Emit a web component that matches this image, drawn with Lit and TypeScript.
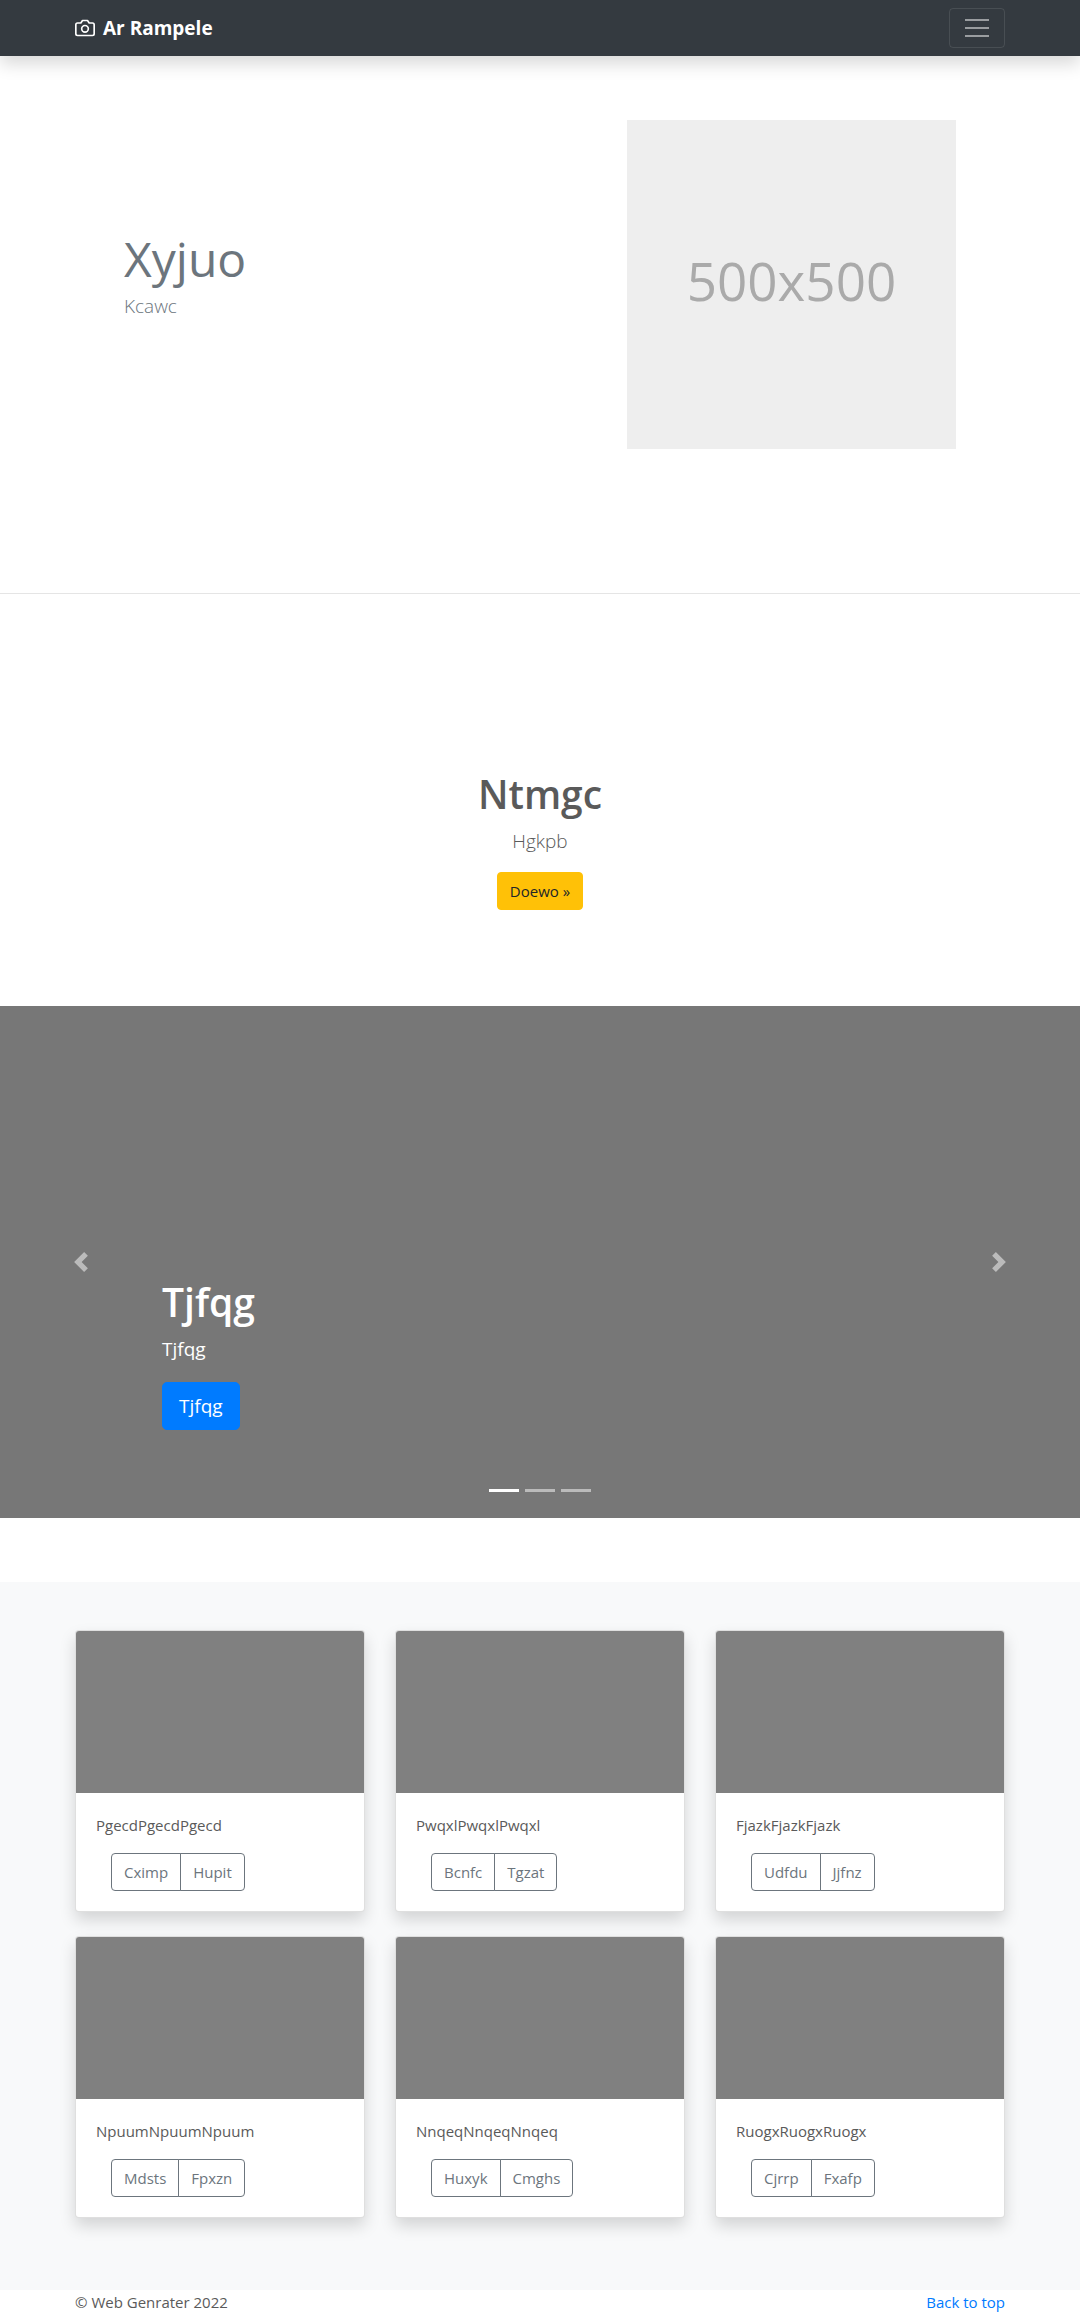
import { LitElement, html, css, svg } from "lit";
import { customElement, property, state } from "lit/decorators.js";
import { classMap } from "lit/directives/class-map.js";

interface Album {
  text: string;
  first: string;
  second: string;
}

const ALBUMS: Album[] = [
  { text: "PgecdPgecdPgecd", first: "Cximp", second: "Hupit" },
  { text: "PwqxlPwqxlPwqxl", first: "Bcnfc", second: "Tgzat" },
  { text: "FjazkFjazkFjazk", first: "Udfdu", second: "Jjfnz" },
  { text: "NpuumNpuumNpuum", first: "Mdsts", second: "Fpxzn" },
  { text: "NnqeqNnqeqNnqeq", first: "Huxyk", second: "Cmghs" },
  { text: "RuogxRuogxRuogx", first: "Cjrrp", second: "Fxafp" },
];

const cameraPath = svg`
  <path d="M23 19a2 2 0 0 1-2 2H3a2 2 0 0 1-2-2V8a2 2 0 0 1 2-2h4l2-3h6l2 3h4a2 2 0 0 1 2 2z"></path>
  <circle cx="12" cy="13" r="4"></circle>`;

@customElement("site-navbar")
export class SiteNavbar extends LitElement {
  static styles = css`
    :host { display: block; }
    .bar {
      position: relative;
      background: #343a40;
      box-shadow: 0 8px 16px rgba(0, 0, 0, 0.15);
    }
    .inner {
      box-sizing: border-box;
      max-width: 960px;
      margin: 0 auto;
      padding: 8px 15px;
      display: flex;
      align-items: center;
      justify-content: space-between;
    }
    .brand {
      display: flex;
      align-items: center;
      gap: 8px;
      color: #fff;
      font-size: 19px;
      line-height: 32px;
      font-weight: 700;
      text-decoration: none;
    }
    .camera {
      width: 20px;
      height: 20px;
      fill: none;
      stroke: currentColor;
      stroke-width: 2;
      stroke-linecap: round;
      stroke-linejoin: round;
    }
    .toggler {
      display: flex;
      padding: 4px 12px;
      border: 1px solid rgba(255, 255, 255, 0.1);
      border-radius: 4px;
      background: transparent;
      cursor: pointer;
    }
    .lines {
      width: 30px;
      height: 30px;
      stroke: rgba(255, 255, 255, 0.5);
      stroke-width: 2;
    }
  `;

  render() {
    return html`
      <header class="bar">
        <nav class="inner">
          <a class="brand" href="#">
            <svg class="camera" viewBox="0 0 24 24" aria-hidden="true">${cameraPath}</svg>
            <span>Ar Rampele</span>
          </a>
          <button class="toggler" type="button" aria-label="Toggle navigation">
            <svg class="lines" viewBox="0 0 30 30" aria-hidden="true">
              <path d="M3 7h24M3 15h24M3 23h24"></path>
            </svg>
          </button>
        </nav>
      </header>
    `;
  }
}

@customElement("site-carousel")
export class SiteCarousel extends LitElement {
  static styles = css`
    :host { display: block; }
    .carousel {
      position: relative;
      box-sizing: border-box;
      min-height: 512px;
      padding: 0 15% 88px;
      display: flex;
      flex-direction: column;
      justify-content: flex-end;
      align-items: flex-start;
      background: #777;
      color: #fff;
    }
    .title {
      margin: 0 0 8px;
      font-size: 39px;
      line-height: 48px;
      font-weight: 600;
    }
    .lead {
      margin: 0 0 18px;
      font-size: 19px;
      line-height: 30px;
    }
    .action {
      padding: 8px 16px;
      border: 1px solid #007bff;
      border-radius: 5px;
      background: #007bff;
      color: #fff;
      font-size: 19px;
      line-height: 30px;
      text-decoration: none;
    }
    .control {
      position: absolute;
      top: 0;
      bottom: 0;
      width: 15%;
      padding: 0;
      border: 0;
      display: flex;
      align-items: center;
      justify-content: center;
      background: none;
      opacity: 0.5;
      cursor: pointer;
    }
    .prev { left: 0; }
    .next { right: 0; }
    .chevron {
      width: 20px;
      height: 20px;
      fill: #fff;
    }
    .marks {
      position: absolute;
      left: 15%;
      right: 15%;
      bottom: 16px;
      display: flex;
      justify-content: center;
      gap: 6px;
    }
    .mark {
      width: 30px;
      height: 23px;
      padding: 10px 0;
      border: 0;
      background: #fff content-box;
      opacity: 0.5;
      cursor: pointer;
    }
    .mark.active { opacity: 1; }
  `;

  @state() private active = 0;

  private step(by: number) {
    this.active = (this.active + by + 3) % 3;
  }

  render() {
    return html`
      <section class="carousel">
        <h1 class="title">Tjfqg</h1>
        <p class="lead">Tjfqg</p>
        <a class="action" href="#">Tjfqg</a>
        <button class="control prev" type="button" aria-label="Previous" @click=${() => this.step(-1)}>
          <svg class="chevron" viewBox="0 0 8 8" aria-hidden="true">
            <path d="M5.25 0l-4 4 4 4 1.5-1.5L4.25 4l2.5-2.5L5.25 0z"></path>
          </svg>
        </button>
        <button class="control next" type="button" aria-label="Next" @click=${() => this.step(1)}>
          <svg class="chevron" viewBox="0 0 8 8" aria-hidden="true">
            <path d="M2.75 0l-1.5 1.5L3.75 4l-2.5 2.5L2.75 8l4-4-4-4z"></path>
          </svg>
        </button>
        <div class="marks">
          ${[0, 1, 2].map(
            (i) => html`<button
              type="button"
              class=${classMap({ mark: true, active: i === this.active })}
              aria-label="Slide ${i + 1}"
              @click=${() => (this.active = i)}
            ></button>`
          )}
        </div>
      </section>
    `;
  }
}

@customElement("album-card")
export class AlbumCard extends LitElement {
  static styles = css`
    :host { display: block; }
    .card {
      border: 1px solid rgba(0, 0, 0, 0.125);
      border-radius: 4px;
      background: #fff;
      background-clip: border-box;
      box-shadow: 0 8px 16px rgba(0, 0, 0, 0.15);
    }
    .thumb {
      height: 162px;
      border-radius: 3px 3px 0 0;
      background: #808080;
    }
    .body { padding: 20px; }
    .text {
      margin: 0 0 16px;
      font-size: 15px;
      line-height: 24px;
    }
    .group {
      display: flex;
      margin-left: 15px;
    }
    .btn {
      padding: 6px 12px;
      border: 1px solid #6c757d;
      background: transparent;
      color: #6c757d;
      font-family: inherit;
      font-size: 15px;
      line-height: 24px;
      cursor: pointer;
    }
    .first { border-radius: 4px 0 0 4px; }
    .second {
      margin-left: -1px;
      border-radius: 0 4px 4px 0;
    }
  `;

  @property({ attribute: false }) album!: Album;

  render() {
    return html`
      <article class="card">
        <div class="thumb"></div>
        <div class="body">
          <p class="text">${this.album.text}</p>
          <div class="group">
            <button class="btn first" type="button">${this.album.first}</button>
            <button class="btn second" type="button">${this.album.second}</button>
          </div>
        </div>
      </article>
    `;
  }
}

@customElement("app-root")
export class AppRoot extends LitElement {
  static styles = css`
    :host {
      display: block;
      background: #fff;
      color: #5a5a5a;
      font-family: "Open Sans", "Noto Sans", sans-serif;
      font-size: 15px;
      line-height: 24px;
    }
    .container {
      box-sizing: border-box;
      max-width: 960px;
      margin: 0 auto;
      padding: 0 15px;
    }
    .hero {
      display: flex;
      justify-content: space-between;
      align-items: flex-start;
      padding: 64px 64px 144px;
    }
    .intro {
      padding-top: 107px;
      color: #6c757d;
    }
    .heading {
      margin: 0;
      font-size: 48px;
      line-height: 64px;
      font-weight: 400;
    }
    .lead {
      margin: 0;
      font-size: 19px;
      line-height: 30px;
      font-weight: 300;
    }
    .picture {
      box-sizing: border-box;
      flex: 0 1 329px;
      aspect-ratio: 1;
      padding-bottom: 8px;
      display: flex;
      align-items: center;
      justify-content: center;
      background: #eee;
      color: #aaa;
      font-size: 53px;
      line-height: 64px;
    }
    .rule {
      margin: 0;
      border: 0;
      border-top: 1px solid rgba(0, 0, 0, 0.1);
    }
    .promo {
      padding: 176px 15px 96px;
      display: flex;
      flex-direction: column;
      align-items: center;
      text-align: center;
    }
    .title {
      margin: 0 0 8px;
      font-size: 39px;
      line-height: 48px;
      font-weight: 600;
    }
    .promo .lead { margin-bottom: 16px; }
    .more {
      padding: 6px 12px;
      border: 1px solid #ffc107;
      border-radius: 4px;
      background: #ffc107;
      color: #212529;
      text-decoration: none;
    }
    .album {
      margin-top: 64px;
      padding: 48px 0 72px;
      background: #f8f9fa;
    }
    .cards {
      display: grid;
      grid-template-columns: repeat(3, minmax(0, 1fr));
      gap: 24px 30px;
    }
    .footer {
      display: flex;
      justify-content: space-between;
    }
    .top {
      color: #007bff;
      text-decoration: none;
    }
  `;

  render() {
    return html`
      <site-navbar></site-navbar>
      <main>
        <section class="container hero">
          <div class="intro">
            <h2 class="heading">Xyjuo</h2>
            <p class="lead">Kcawc</p>
          </div>
          <div class="picture">500x500</div>
        </section>
        <hr class="rule" />
        <section class="promo">
          <h1 class="title">Ntmgc</h1>
          <p class="lead">Hgkpb</p>
          <a class="more" href="#">Doewo »</a>
        </section>
        <site-carousel></site-carousel>
        <section class="album">
          <div class="container cards">
            ${ALBUMS.map((album) => html`<album-card .album=${album}></album-card>`)}
          </div>
        </section>
      </main>
      <footer class="container footer">
        <span>© Web Genrater 2022</span>
        <a class="top" href="#">Back to top</a>
      </footer>
    `;
  }
}
